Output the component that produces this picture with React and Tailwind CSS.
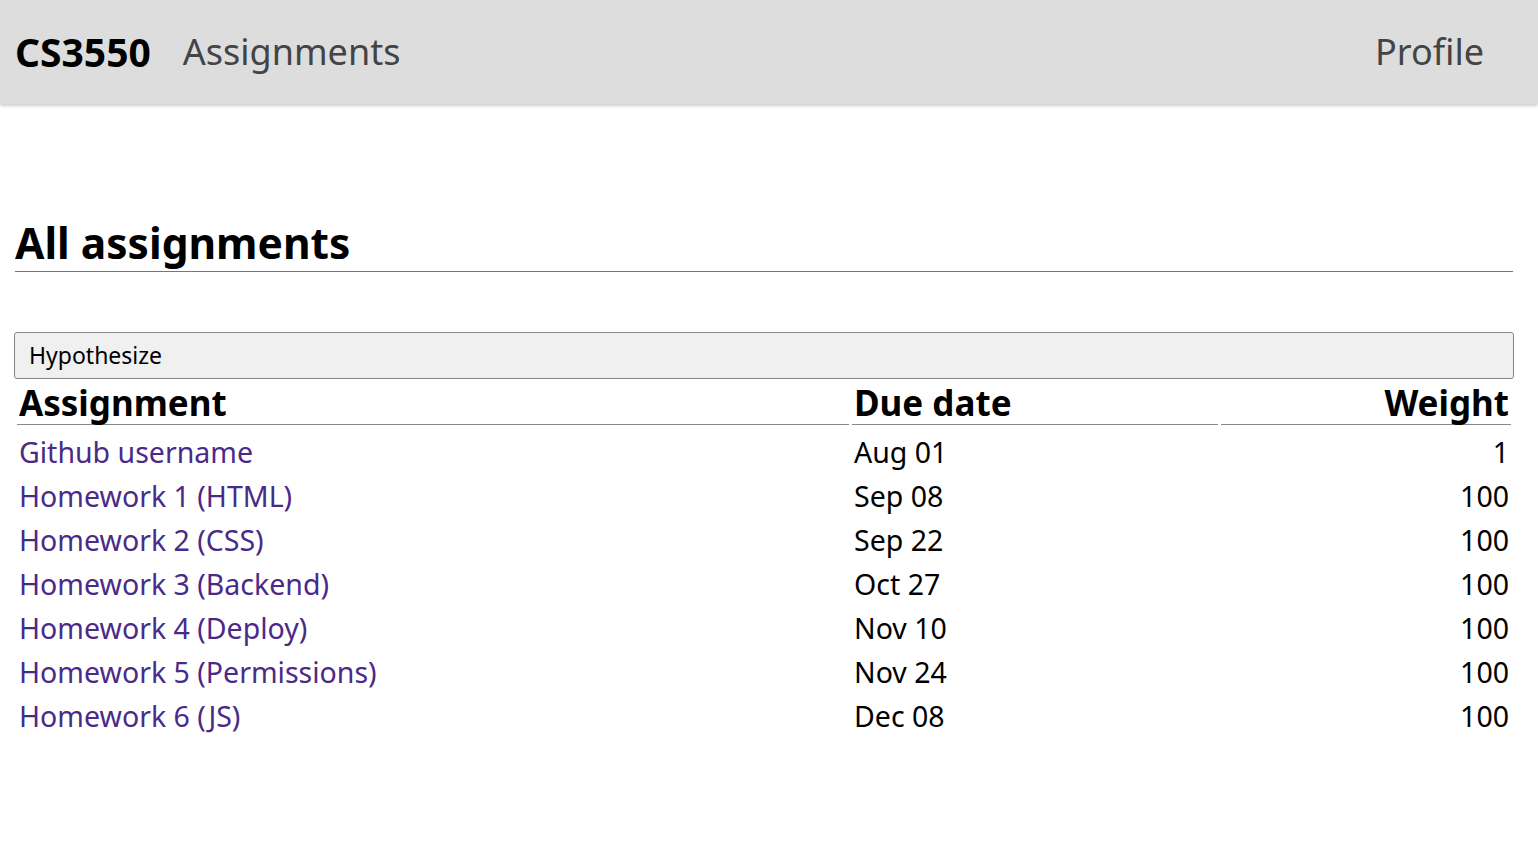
import React from 'react'

const rows = [
  { name: 'Github username', due: 'Aug 01', weight: 1 },
  { name: 'Homework 1 (HTML)', due: 'Sep 08', weight: 100 },
  { name: 'Homework 2 (CSS)', due: 'Sep 22', weight: 100 },
  { name: 'Homework 3 (Backend)', due: 'Oct 27', weight: 100 },
  { name: 'Homework 4 (Deploy)', due: 'Nov 10', weight: 100 },
  { name: 'Homework 5 (Permissions)', due: 'Nov 24', weight: 100 },
  { name: 'Homework 6 (JS)', due: 'Dec 08', weight: 100 },
]

export default function App() {
  return (
    <div className="min-h-screen bg-white font-['Noto_Sans',sans-serif] text-black">
      {/* Top bar */}
      <header className="h-[104px] bg-[#dddddd] shadow-[0_2px_3px_rgba(0,0,0,0.2)] flex items-center pl-[15px] pr-[54px]">
        <span className="text-[39px] font-bold">CS3550</span>
        <a href="#" className="ml-[32px] text-[36px] text-[#444444]">Assignments</a>
        <a href="#" className="ml-auto text-[36px] text-[#444444]">Profile</a>
      </header>

      <main className="pl-[15px] pr-[25px] pt-[113px]">
        <h1 className="text-[42.5px] font-bold leading-[1.2] border-b border-[#777777] pb-[3px]">All assignments</h1>

        <table className="w-[1500px] -ml-[1px] mt-[60px] border-separate border-spacing-[3px]">
          <caption className="text-left text-[23px] bg-[#f0f0f0] border border-[#888888] rounded-[3px] px-[14px] h-[47px] leading-[45px]">
            Hypothesize
          </caption>
          <thead>
            <tr className="text-[35px] font-bold leading-[1.2]">
              <th className="text-left font-bold border-b border-[#888888] pl-[2px] w-[832px]">Assignment</th>
              <th className="text-left font-bold border-b border-[#888888] pl-[2px] w-[366px]">Due date</th>
              <th className="text-right font-bold border-b border-[#888888] pr-[2px]">Weight</th>
            </tr>
          </thead>
          <tbody className="[&>tr:first-child>td]:pt-[5px]">
            {rows.map((r) => (
              <tr key={r.name} className="text-[28.5px] leading-[39px]">
                <td className="pl-[2px] pt-[2px]">
                  <a href="#" className="text-[#4a2a88]">{r.name}</a>
                </td>
                <td className="pl-[2px] pt-[2px]">{r.due}</td>
                <td className="text-right pr-[2px] pt-[2px]">{r.weight}</td>
              </tr>
            ))}
          </tbody>
        </table>
      </main>
    </div>
  )
}
